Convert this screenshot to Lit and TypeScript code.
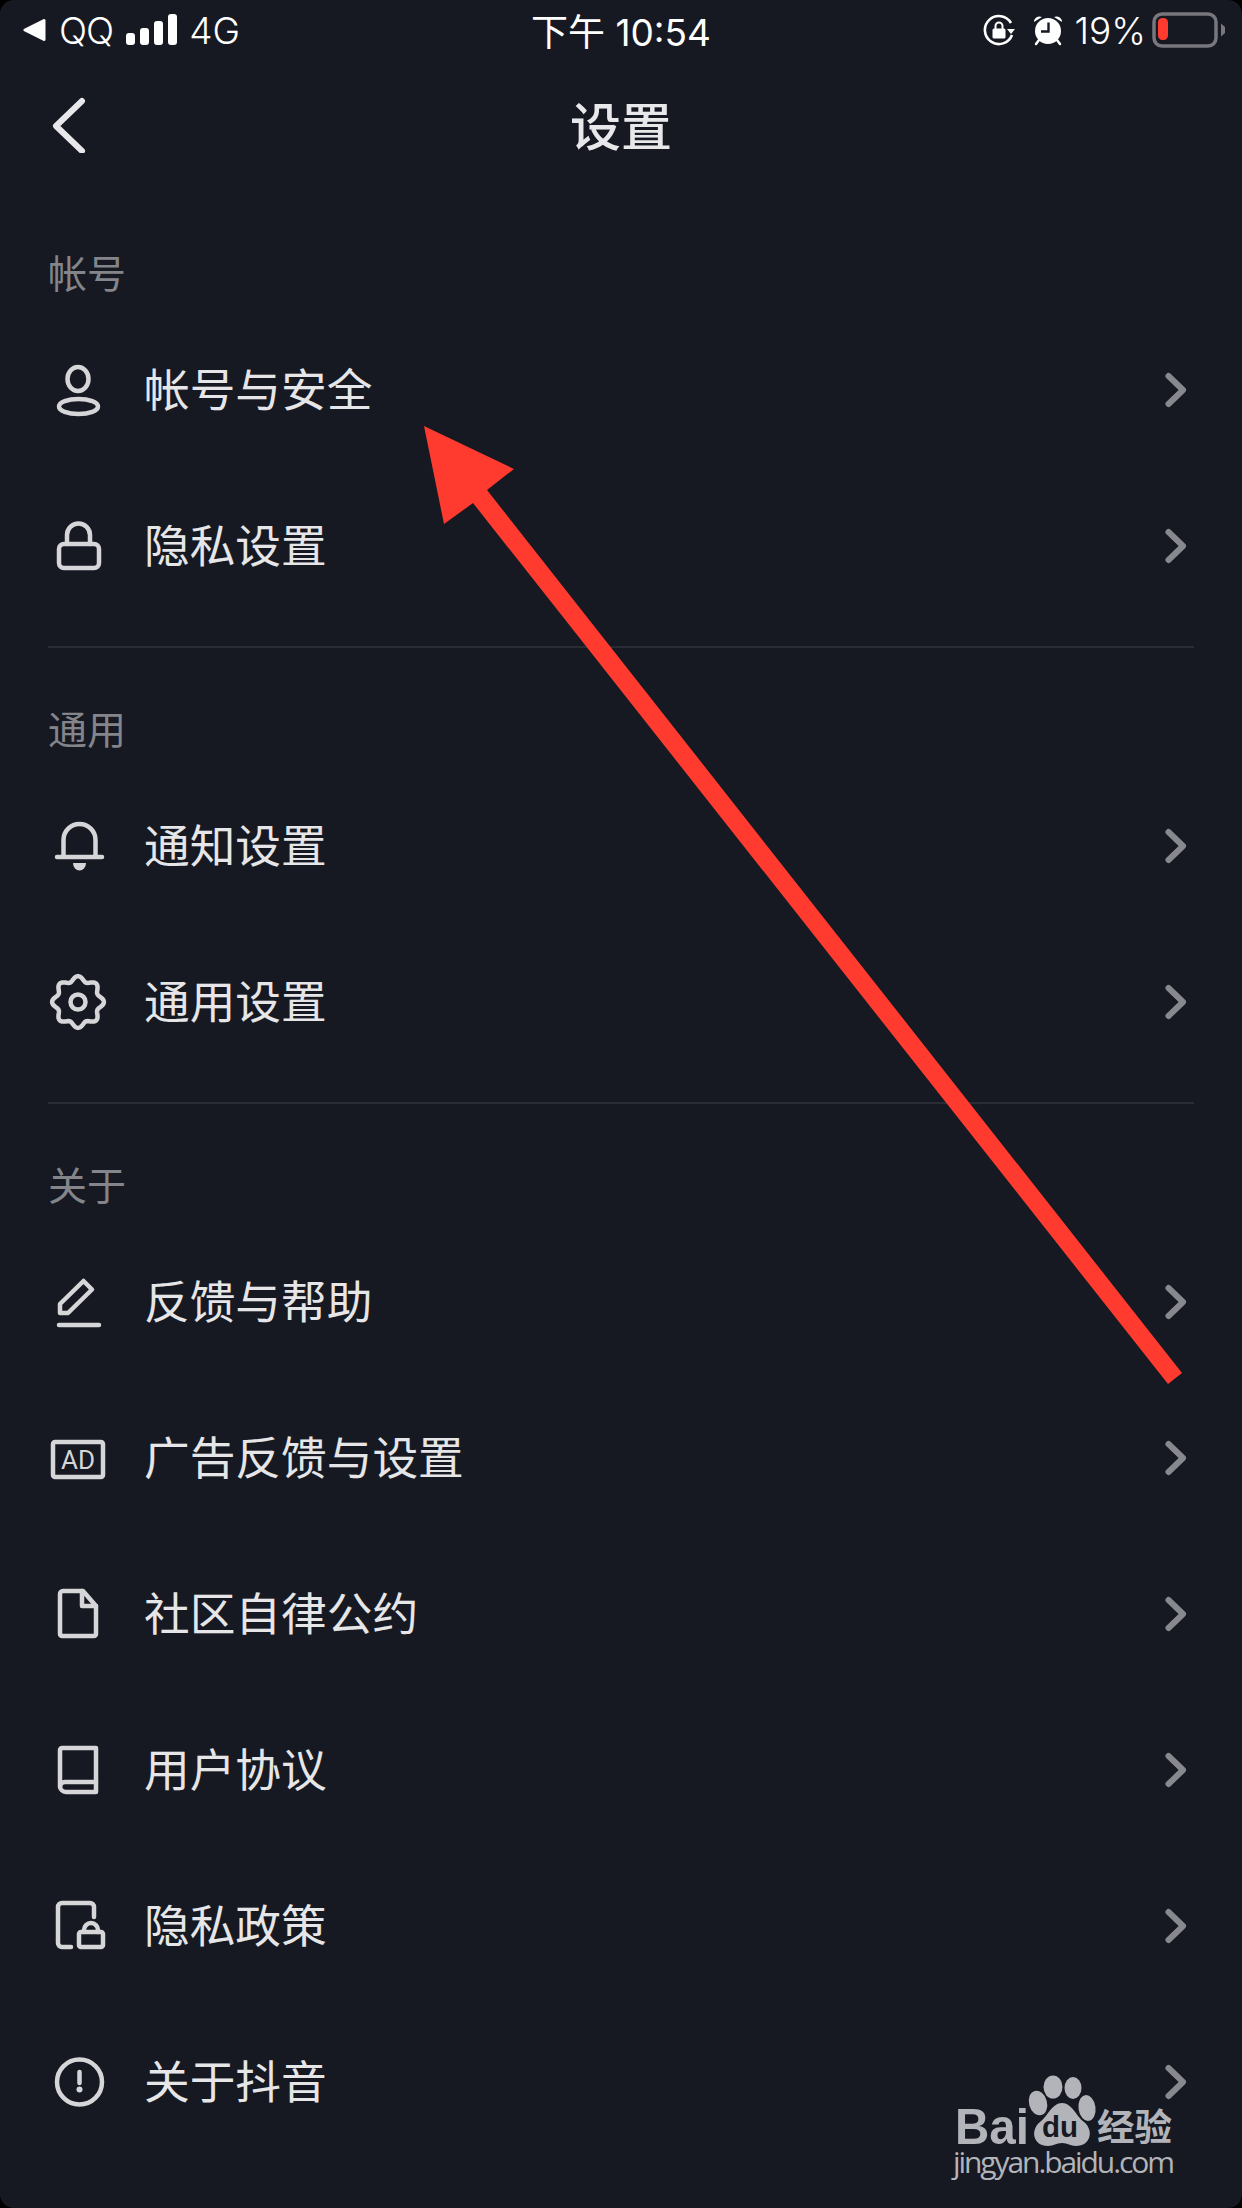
import { LitElement, html, css, svg } from 'lit';
import { customElement } from 'lit/decorators.js';

// 8 lobed outline for the gear icon
const gearPath = () => {
  const pts: string[] = [];
  for (let i = 0; i < 120; i++) {
    const t = (i / 120) * Math.PI * 2;
    const r = 23.4 + 2.5 * Math.cos(8 * t);
    pts.push(`${(30 + r * Math.sin(t)).toFixed(2)} ${(30 - r * Math.cos(t)).toFixed(2)}`);
  }
  return `M${pts.join('L')}Z`;
};

const icons: Record<string, unknown> = {
  person: svg`
    <ellipse cx="30" cy="19" rx="10.5" ry="12"/>
    <ellipse cx="30.500" cy="46.500" rx="19.500" ry="7.500"/>`,
  lock: svg`
    <rect x="11" y="28" width="40" height="24" rx="5"/>
    <path d="M19 28V19a11.5 11.5 0 0 1 23 0V28"/>`,
  bell: svg`
    <path d="M9 41H54M15.5 41V24a16 16 0 0 1 32 0V41"/>
    <path class="solid" d="M25 47H38a6.5 7.5 0 0 1-13 0Z"/>`,
  gear: svg`
    <path d=${gearPath()}/>
    <circle cx="30" cy="30" r="7.5"/>`,
  pencil: svg`
    <path d="M12 41V32L35.5 9L44 17.5L20 41Z"/>
    <path d="M11 53H51"/>`,
  ad: svg`
    <rect x="5" y="14" width="50" height="35" rx="2"/>
    <text class="ad" x="30" y="40.500" text-anchor="middle">AD</text>`,
  doc: svg`
    <path d="M15 7H35L48 22V50a2 2 0 0 1-2 2H14a2 2 0 0 1-2-2V10a3 3 0 0 1 3-3Z"/>
    <path d="M34 7V22H48"/>`,
  book: svg`
    <path d="M48 8H14a2 2 0 0 0-2 2V46a6 6 0 0 0 6 6H48Z"/>
    <path d="M12 47a5 5 0 0 1 5-5H48"/>`,
  policy: svg`
    <path d="M23 51H14a4 4 0 0 1-4-4V11a4 4 0 0 1 4-4H42a4 4 0 0 1 4 4V21"/>
    <rect x="31" y="36" width="24" height="15" rx="2"/>
    <path d="M36 36V34a7 7 0 0 1 14 0V36"/>`,
  info: svg`
    <circle cx="31.5" cy="30" r="22.5"/>
    <path d="M31.5 20V31"/>
    <circle class="solid" cx="31.5" cy="37.5" r="3"/>`,
};

type Row = { icon: string; label: string };
type Section = { title: string; rows: Row[] };

const sections: Section[] = [
  {
    title: '帐号',
    rows: [
      { icon: 'person', label: '帐号与安全' },
      { icon: 'lock', label: '隐私设置' },
    ],
  },
  {
    title: '通用',
    rows: [
      { icon: 'bell', label: '通知设置' },
      { icon: 'gear', label: '通用设置' },
    ],
  },
  {
    title: '关于',
    rows: [
      { icon: 'pencil', label: '反馈与帮助' },
      { icon: 'ad', label: '广告反馈与设置' },
      { icon: 'doc', label: '社区自律公约' },
      { icon: 'book', label: '用户协议' },
      { icon: 'policy', label: '隐私政策' },
      { icon: 'info', label: '关于抖音' },
    ],
  },
];

@customElement('app-root')
export class AppRoot extends LitElement {
  static styles = css`
    :host {
      display: block;
      width: 1242px;
      height: 2208px;
      background: #000;
      font-family: 'Noto Sans CJK SC', sans-serif;
    }

    .screen {
      position: relative;
      height: 2208px;
      overflow: hidden;
      border-radius: 14px;
      background: #161922;
    }

    .status {
      display: grid;
      grid-template-columns: 1fr auto 1fr;
      align-items: center;
      height: 60px;
      color: #fff;
      font-family: Inter, 'Noto Sans CJK SC', sans-serif;
      font-size: 37px;
      font-weight: 300;
    }

    .status-left,
    .status-right {
      display: flex;
      align-items: center;
    }

    .status-left {
      padding-left: 23px;
    }

    .status-right {
      justify-content: flex-end;
      padding-right: 16px;
    }

    .status svg {
      display: block;
      flex: none;
    }

    .qq {
      margin: 0 13px 0 13px;
      letter-spacing: -1px;
    }

    .net {
      margin-left: 11px;
    }

    .time {
      font-size: 37px;
      font-weight: 400;
    }

    .alarm {
      margin-left: 18px;
    }

    .percent {
      margin: 0 6px 0 12px;
    }

    .nav {
      position: relative;
      display: flex;
      align-items: center;
      justify-content: center;
      height: 128px;
      padding-bottom: 4px;
    }

    .back {
      position: absolute;
      left: 48px;
      top: 33px;
      display: block;
    }

    .title {
      color: #e8e8ea;
      font-size: 51px;
      font-weight: 500;
      line-height: 60px;
    }

    .section {
      padding-top: 44px;
    }

    .divider {
      height: 2px;
      margin: 22px 48px 0;
      background: #2a2c35;
    }

    .section-title {
      height: 76px;
      padding: 0 48px;
      color: #84858b;
      font-size: 39px;
      line-height: 71px;
    }

    .row {
      display: flex;
      align-items: center;
      height: 156px;
      padding: 0 48px;
    }

    .icon {
      display: block;
      flex: none;
      width: 60px;
      height: 60px;
      margin-right: 36px;
      fill: none;
      stroke: #d6d6d9;
      stroke-width: 4.5;
      stroke-linecap: round;
      stroke-linejoin: round;
    }

    .icon .solid {
      fill: #d6d6d9;
      stroke: none;
    }

    .icon .ad {
      fill: #d6d6d9;
      stroke: none;
      font-family: Roboto, sans-serif;
      font-size: 26px;
    }

    .label {
      flex: 1;
      margin-bottom: 6px;
      color: #e6e6e8;
      font-size: 45.7px;
      line-height: 60px;
    }

    .chevron {
      display: block;
      flex: none;
      fill: none;
      stroke: #88898e;
      stroke-width: 6;
      stroke-linecap: round;
      stroke-linejoin: round;
    }

    .overlay {
      position: absolute;
      left: 0;
      top: 0;
      pointer-events: none;
    }

    .mark {
      fill: #b3b4b9;
    }

    .mark-bai {
      font-family: 'Liberation Sans', sans-serif;
      font-size: 50px;
      font-weight: 700;
    }

    .mark-du {
      fill: #161922;
      font-family: 'Liberation Sans', sans-serif;
      font-size: 30px;
      font-weight: 700;
    }

    .mark-jy {
      font-family: 'Noto Sans CJK SC', sans-serif;
      font-size: 37px;
      font-weight: 700;
    }

    .mark-url {
      font-family: 'Open Sans', sans-serif;
      font-size: 30px;
    }
  `;

  private renderStatus() {
    return html`
      <div class="status">
        <div class="status-left">
          <svg width="23" height="24" viewBox="0 0 23 24">
            <path d="M21 2.5V21.5L2 12Z" fill="#fff" stroke="#fff" stroke-width="3" stroke-linejoin="round"/>
          </svg>
          <span class="qq">QQ</span>
          <svg width="52" height="32" viewBox="0 0 52 32" fill="#fff">
            <rect x="0" y="19" width="9" height="12" rx="3"/>
            <rect x="14" y="14" width="9" height="17" rx="3"/>
            <rect x="28" y="7" width="9" height="24" rx="3"/>
            <rect x="42" y="0" width="9" height="31" rx="3"/>
          </svg>
          <span class="net">4G</span>
        </div>
        <div class="time">下午 10:54</div>
        <div class="status-right">
          <svg width="32" height="32" viewBox="0 0 32 32">
            <path d="M28 9A14 14 0 1 0 29 21" fill="none" stroke="#fff" stroke-width="2.6"/>
            <path d="M24 15H32L28 20Z" fill="#fff"/>
            <rect x="9.5" y="14.5" width="13" height="10" rx="1.5" fill="#fff"/>
            <path d="M12.5 15V12a3.5 3.5 0 0 1 7 0V15" fill="none" stroke="#fff" stroke-width="2"/>
          </svg>
          <svg class="alarm" width="30" height="32" viewBox="0 0 30 32">
            <path d="M1 8a5.500 5.500 0 0 1 8-5ZM29 8a5.500 5.500 0 0 0-8-5Z" fill="#fff"/>
            <path d="M6 26L3 30M24 26L27 30" stroke="#fff" stroke-width="2.500" stroke-linecap="round"/>
            <circle cx="15" cy="17" r="13" fill="#fff"/>
            <path d="M15.500 8.500V17.500H8" fill="none" stroke="#161922" stroke-width="2.400"/>
          </svg>
          <span class="percent">19%</span>
          <svg width="74" height="36" viewBox="0 0 74 36">
            <rect x="2" y="2" width="62" height="32" rx="8" fill="none" stroke="#77777d" stroke-width="3.500"/>
            <rect x="6" y="6" width="10" height="22" rx="4.500" fill="#ff3b30"/>
            <path d="M69 11.500L73 15V21L69 24.500Z" fill="#77777d"/>
          </svg>
        </div>
      </div>
    `;
  }

  private renderRow(row: Row) {
    return html`
      <div class="row">
        <svg class="icon" viewBox="0 0 60 60">${icons[row.icon]}</svg>
        <div class="label">${row.label}</div>
        <svg class="chevron" width="30" height="40" viewBox="0 0 30 40">
          <path d="M4.500 6L19 20L4.500 34"/>
        </svg>
      </div>
    `;
  }

  render() {
    return html`
      <div class="screen">
        ${this.renderStatus()}
        <div class="nav">
          <svg class="back" width="40" height="60" viewBox="0 0 40 60" fill="none" stroke="#e8e8ea" stroke-width="6" stroke-linecap="round" stroke-linejoin="round">
            <path d="M34 8L8 33L34 58"/>
          </svg>
          <div class="title">设置</div>
        </div>
        ${sections.map((s, i) => html`
          ${i > 0 ? html`<div class="divider"></div>` : ''}
          <div class="section">
            <div class="section-title">${s.title}</div>
            ${s.rows.map(r => this.renderRow(r))}
          </div>
        `)}

        <svg class="overlay" width="1242" height="2208" viewBox="0 0 1242 2208">
          <path fill="#ff3b30" d="M424 426L514 469L487 490L1182 1373L1168 1384L473 503L444 524Z"/>

          <g class="mark">
            <ellipse cx="1053" cy="2087" rx="9.500" ry="11.500"/>
            <ellipse cx="1073" cy="2088" rx="8.500" ry="11"/>
            <ellipse cx="1038" cy="2103" rx="9" ry="12.500" transform="rotate(-15 1038 2103)"/>
            <ellipse cx="1087" cy="2108" rx="8.500" ry="13" transform="rotate(-8 1087 2108)"/>
            <path d="M1062 2103C1072 2103 1076 2116 1084 2122C1094 2130 1091 2146 1076 2146C1070 2146 1068 2143 1062 2143C1056 2143 1054 2146 1048 2146C1033 2146 1030 2130 1040 2122C1048 2116 1052 2103 1062 2103Z"/>
            <text class="mark-du" x="1042" y="2137" textLength="36" lengthAdjust="spacingAndGlyphs">du</text>
            <text class="mark-bai" x="955" y="2144" textLength="74" lengthAdjust="spacingAndGlyphs">Bai</text>
            <text class="mark-jy" x="1097" y="2141" textLength="75" lengthAdjust="spacingAndGlyphs">经验</text>
            <text class="mark-url" x="953" y="2173" textLength="222">jingyan.baidu.com</text>
          </g>
        </svg>
      </div>
    `;
  }
}
